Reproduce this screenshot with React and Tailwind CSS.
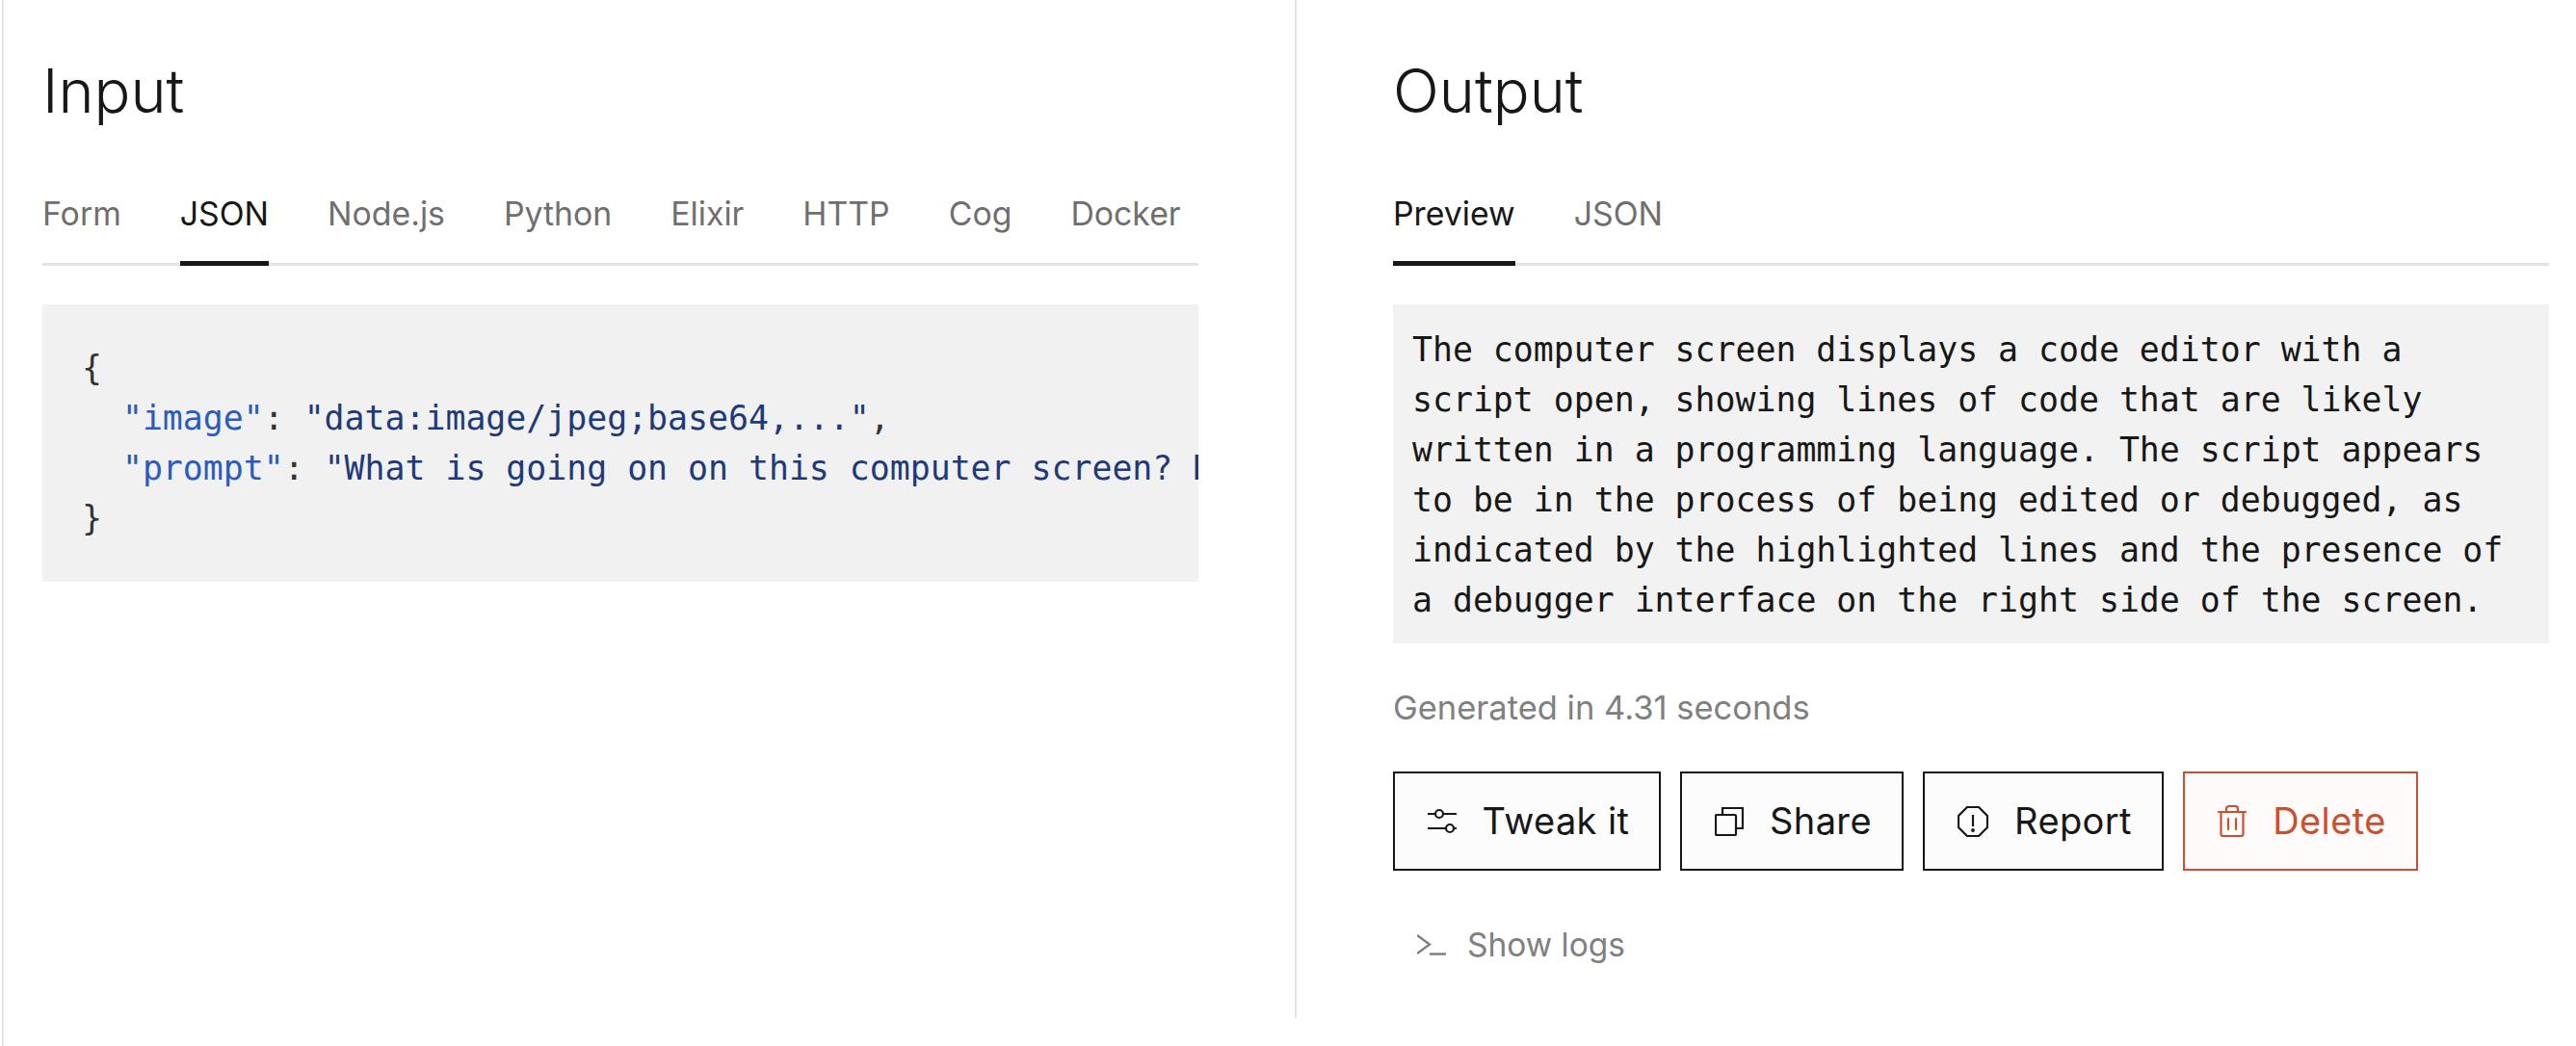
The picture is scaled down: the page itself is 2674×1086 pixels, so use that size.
import { useState } from 'react'

const MONO = "font-['DejaVu_Sans_Mono',monospace]"

const INPUT_TABS = ['Form', 'JSON', 'Node.js', 'Python', 'Elixir', 'HTTP', 'Cog', 'Docker']
const OUTPUT_TABS = ['Preview', 'JSON']

function Tabs({ items, initial }) {
  const [active, setActive] = useState(initial)
  return (
    <div className="mt-[68px] flex gap-[61px] border-b-[3px] border-[#e4e4e4] h-[78px]">
      {items.map((t) => (
        <button
          key={t}
          onClick={() => setActive(t)}
          className={`h-[78px] pb-[31px] text-[33.8px] leading-[47px] font-normal border-b-[5px] ${
            active === t ? 'text-[#171717] border-[#171717]' : 'text-[#6f6f6f] border-transparent'
          }`}
        >
          {t}
        </button>
      ))}
    </div>
  )
}

function SlidersIcon() {
  return (
    <svg width="30" height="30" viewBox="0 0 30 30" fill="none" stroke="currentColor" strokeWidth="2.2">
      <path d="M0 7h8M16 7h14M0 22h19M27 22h3" />
      <circle cx="12" cy="7" r="4" />
      <circle cx="23" cy="22" r="4" />
    </svg>
  )
}

function CopyIcon() {
  return (
    <svg width="30" height="30" viewBox="0 0 30 30" fill="none" stroke="currentColor" strokeWidth="2.2" strokeLinejoin="round">
      <rect x="1" y="8" width="21" height="21" rx="1" />
      <path d="M8 8V1h21v21h-7" />
    </svg>
  )
}

function ReportIcon() {
  return (
    <svg width="32" height="32" viewBox="0 0 32 32" fill="none" stroke="currentColor" strokeWidth="2.2">
      <path d="M10 1h12l9 9v12l-9 9H10l-9-9V10z" strokeLinejoin="round" />
      <path d="M16 9v12" />
      <circle cx="16" cy="25" r="0.8" fill="currentColor" />
    </svg>
  )
}

function TrashIcon() {
  return (
    <svg width="30" height="33" viewBox="0 0 30 33" fill="none" stroke="currentColor" strokeWidth="2.2" strokeLinecap="round" strokeLinejoin="round">
      <path d="M1 7h28M3.5 7v23a2 2 0 0 0 2 2h19a2 2 0 0 0 2-2V7" />
      <path d="M9 7V4a3 3 0 0 1 3-3h6a3 3 0 0 1 3 3v3M11 14v11M19 14v11" />
    </svg>
  )
}

function LogsIcon() {
  return (
    <svg width="30" height="22" viewBox="0 0 30 22" fill="none" stroke="currentColor" strokeWidth="2.4">
      <path d="M0 1l13 9.5L0 20M13 20.5h17" />
    </svg>
  )
}

function ActionButton({ icon, label, width, danger }) {
  return (
    <button
      className={`flex h-[103px] items-center justify-center gap-[27px] border-2 pl-[3px] text-[38px] font-normal tracking-[0.4px] ${width} ${
        danger ? 'border-[#cb4f31] bg-[#fefbfa] text-[#cb4f31]' : 'border-[#171717] bg-[#fcfcfc] text-[#171717]'
      }`}
    >
      {icon}
      {label}
    </button>
  )
}

export default function App() {
  return (
    <div className="ml-[2px] flex h-[1086px] border-l-2 border-[#e4e4e4] bg-white font-['Inter',sans-serif] font-light">
      {/* Input */}
      <section className="h-[1057px] w-[1342px] shrink-0 border-r-2 border-[#e4e4e4] pl-[40px] pr-[100px]">
        <h2 className="pt-[58px] text-[63px] leading-[72px] text-[#171717]">Input</h2>
        <Tabs items={INPUT_TABS} initial="JSON" />
        <div className={`mt-[40px] h-[288px] overflow-hidden bg-[#f1f1f1] pt-[40px] pl-[41px] text-[34.85px] leading-[52px] whitespace-pre font-normal ${MONO}`}>
          <div className="text-[#333]">{'{'}</div>
          <div className="text-[#1e3a7a]">
            {'  '}<span className="text-[#2a5bc0]">"image"</span><span className="text-[#333]">: </span>"data:image/jpeg;base64,..."<span className="text-[#333]">,</span>
          </div>
          <div className="text-[#1e3a7a]">
            {'  '}<span className="text-[#2a5bc0]">"prompt"</span><span className="text-[#333]">: </span>"What is going on on this computer screen? Describe it"
          </div>
          <div className="text-[#333]">{'}'}</div>
        </div>
      </section>

      {/* Output */}
      <section className="flex-1 pl-[100px] pr-[28px]">
        <h2 className="pt-[58px] text-[63px] leading-[72px] text-[#171717]">Output</h2>
        <Tabs items={OUTPUT_TABS} initial="Preview" />
        <div className={`mt-[40px] h-[352px] bg-[#f2f2f2] px-[20px] pt-[21px] text-[34.85px] leading-[52px] font-normal text-[#171717] whitespace-pre ${MONO}`}>
          {`The computer screen displays a code editor with a
script open, showing lines of code that are likely
written in a programming language. The script appears
to be in the process of being edited or debugged, as
indicated by the highlighted lines and the presence of
a debugger interface on the right side of the screen.`}
        </div>
        <p className="mt-[45px] text-[34.5px] leading-[44px] font-normal text-[#808080]">Generated in 4.31 seconds</p>
        <div className="mt-[44px] flex gap-[20px]">
          <ActionButton icon={<SlidersIcon />} label="Tweak it" width="w-[278px]" />
          <ActionButton icon={<CopyIcon />} label="Share" width="w-[232px]" />
          <ActionButton icon={<ReportIcon />} label="Report" width="w-[250px]" />
          <ActionButton icon={<TrashIcon />} label="Delete" width="w-[244px]" danger />
        </div>
        <button className="mt-[55px] ml-[25px] flex items-center gap-[22px] text-[33.5px] leading-[44px] font-normal text-[#808080]">
          <LogsIcon />
          Show logs
        </button>
      </section>
    </div>
  )
}
